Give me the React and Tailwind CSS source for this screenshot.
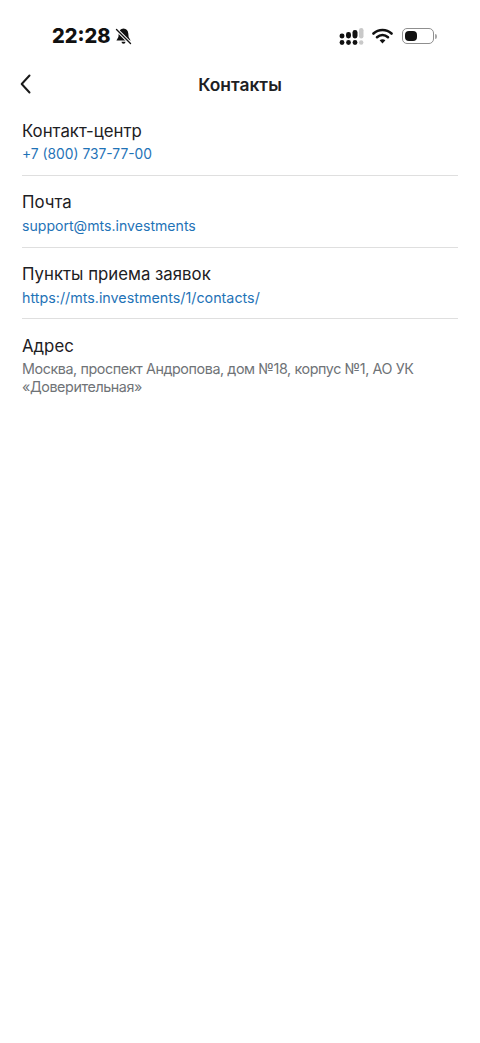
import React from 'react';

const items = [
    { title: 'Контакт-центр', value: '+7 (800) 737-77-00', valueClass: 'text-[13.8px] leading-[22px] text-[#1f73b7]' },
    { title: 'Почта', value: 'support@mts.investments', valueClass: 'mt-[1px] -mb-[1px] text-[14.1px] leading-[22px] text-[#1f73b7]' },
    { title: 'Пункты приема заявок', value: 'https://mts.investments/1/contacts/', valueClass: 'mt-[1px] -mb-[1px] text-[14.3px] leading-[22px] text-[#1f73b7]' },
    { title: 'Адрес', value: 'Москва, проспект Андропова, дом №18, корпус №1, АО УК «Доверительная»', valueClass: 'mt-[1.5px] text-[14.3px] tracking-[-0.4px] leading-[18.5px] text-[#6f7377]' },
];

const BellOff = () => (
    <svg width="19" height="19" viewBox="0 0 19 19" className="ml-[3px]">
        <path d="M9.500 1.500c-3 0-4.600 2.300-4.800 5L4.400 10 2.400 13.600h14.200L14.600 10l-.3-3.500C14.100 3.800 12.500 1.500 9.500 1.500z" fill="#111" />
        <path d="M7.500 14.800a2 2 0 0 0 4 0z" fill="#111" />
        <path d="M2.500 2.500L16.500 16.500" stroke="#fff" strokeWidth="3.200" />
        <path d="M2.500 2.500L16.500 16.500" stroke="#111" strokeWidth="1.400" strokeLinecap="round" />
    </svg>
);

const SignalDots = () => (
    <svg width="25" height="17" viewBox="0 0 25 17">
        <rect x="0.500" y="5.500" width="5" height="5" rx="2.400" fill="#111" />
        <rect x="7" y="4" width="5" height="6.500" rx="2.400" fill="#111" />
        <rect x="13.500" y="2" width="5" height="8.500" rx="2.400" fill="#111" />
        <rect x="20" y="0" width="4.500" height="10.500" rx="2.200" fill="#c9c9c9" />
        <circle cx="3" cy="14.500" r="2.400" fill="#111" />
        <circle cx="9.500" cy="14.500" r="2.400" fill="#111" />
        <circle cx="16" cy="14.500" r="2.400" fill="#111" />
        <circle cx="22.200" cy="14.500" r="2.200" fill="#c9c9c9" />
    </svg>
);

const Wifi = () => (
    <svg width="21" height="16" viewBox="0 0 21 16" fill="none">
        <path d="M1.500 5.500C6.500 .8 14.500 .8 19.500 5.500" stroke="#111" strokeWidth="2.600" strokeLinecap="round" />
        <path d="M5 9.200c3.200-2.900 7.800-2.900 11 0" stroke="#111" strokeWidth="2.600" strokeLinecap="round" />
        <path d="M7.600 12.300c1.800-1.500 4-1.500 5.800 0L10.500 15.500z" fill="#111" />
    </svg>
);

const Battery = () => (
    <div className="flex items-center">
        <div className="w-[32px] h-[16px] rounded-[5px] border border-[#8f8f8f] p-[2px]">
            <div className="w-[12px] h-full rounded-[4px] bg-[#111]" />
        </div>
        <div className="w-[2px] h-[5px] ml-[1px] rounded-r-full bg-[#a8a8a8]" />
    </div>
);

export default function App() {
    return (
        <div className="min-h-[1043px] w-full bg-white font-['Inter',sans-serif]">
            {/* status bar */}
            <div className="h-[61px] pt-[11px] pl-[52px] pr-[43px] flex items-center justify-between">
                <div className="flex items-center font-extrabold text-[20px] leading-none text-[#111]">
                    22:28
                    <BellOff />
                </div>
                <div className="flex items-center gap-[8px]">
                    <SignalDots />
                    <Wifi />
                    <div className="ml-[1px]">
                        <Battery />
                    </div>
                </div>
            </div>

            {/* header */}
            <div className="relative h-[48px] flex items-center justify-center">
                <button className="absolute left-[20px] top-[13px]">
                    <svg width="11" height="20" viewBox="0 0 11 20" fill="none" className="block">
                        <path d="M9.500 1.500L1.700 10L9.500 18.500" stroke="#1a1a1a" strokeWidth="2" strokeLinecap="round" strokeLinejoin="round" />
                    </svg>
                </button>
                <h1 className="font-semibold text-[17.4px] text-[#1d2023]">Контакты</h1>
            </div>

            {/* contacts list */}
            <div className="mx-[22px] mt-[0.5px]">
                {items.map((item, i) => (
                    <div
                        key={item.title}
                        className={`${i === 0 ? 'pt-[9px]' : i === 3 ? 'pt-[15px]' : 'pt-[14px]'} ${i < items.length - 1 ? 'pb-[10.5px] border-b border-[#dfdfdf]' : ''}`}
                    >
                        <div className="text-[16.8px] leading-[24px] text-[#1d2023]">{item.title}</div>
                        <div className={item.valueClass}>{item.value}</div>
                    </div>
                ))}
            </div>
        </div>
    );
}
